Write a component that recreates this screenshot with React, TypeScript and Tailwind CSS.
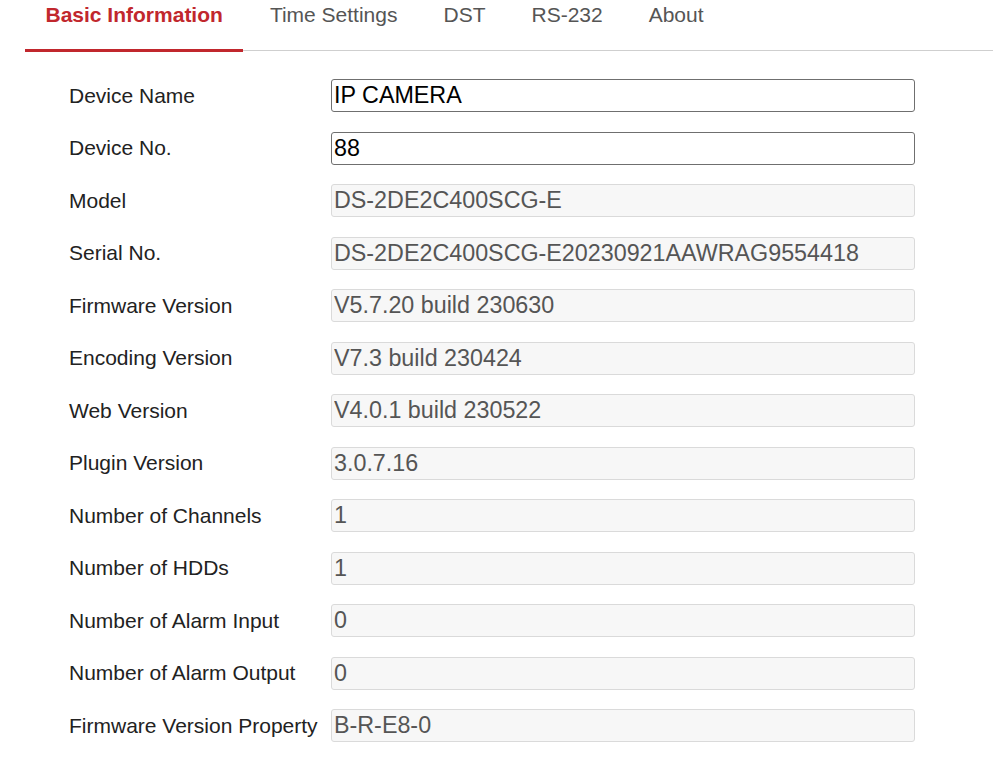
import { useState } from 'react';

type Field = { label: string; value: string; editable?: boolean };

const FIELDS: Field[] = [
  { label: 'Device Name', value: 'IP CAMERA', editable: true },
  { label: 'Device No.', value: '88', editable: true },
  { label: 'Model', value: 'DS-2DE2C400SCG-E' },
  { label: 'Serial No.', value: 'DS-2DE2C400SCG-E20230921AAWRAG9554418' },
  { label: 'Firmware Version', value: 'V5.7.20 build 230630' },
  { label: 'Encoding Version', value: 'V7.3 build 230424' },
  { label: 'Web Version', value: 'V4.0.1 build 230522' },
  { label: 'Plugin Version', value: '3.0.7.16' },
  { label: 'Number of Channels', value: '1' },
  { label: 'Number of HDDs', value: '1' },
  { label: 'Number of Alarm Input', value: '0' },
  { label: 'Number of Alarm Output', value: '0' },
  { label: 'Firmware Version Property', value: 'B-R-E8-0' },
];

const TABS = ['Basic Information', 'Time Settings', 'DST', 'RS-232', 'About'];

export default function App() {
  const [active, setActive] = useState(0);
  const [values, setValues] = useState(FIELDS.map((f) => f.value));

  return (
    <div className="min-h-[776px] w-[993px] bg-white font-['Liberation_Sans',Arial,sans-serif] text-[#222]">
      {/* Tabs */}
      <div className="ml-[25px] flex h-[51px] border-b border-[#cfcfcf]">
        {TABS.map((tab, i) => (
          <button
            key={tab}
            onClick={() => setActive(i)}
            className={
              i === active
                ? '-mb-px mr-[3.5px] h-[52px] border-b-[3px] border-[#c1272d] px-[20.5px] pb-[23px] pt-[3px] text-[21px] leading-[22px] font-bold text-[#c1272d]'
                : 'h-[51px] px-[23px] pb-[24px] pt-[2px] text-[21px] leading-[22px] text-[#555]'
            }
          >
            {tab}
          </button>
        ))}
      </div>

      {/* Form */}
      <div className="mt-[28px] flex flex-col gap-[19.5px] pl-[69px]">
        {FIELDS.map((f, i) => (
          <div key={f.label} className="flex h-[33px] items-center">
            <label className="w-[262px] text-[21px] leading-[24px] text-[#222]">{f.label}</label>
            <input
              value={values[i]}
              readOnly={!f.editable}
              onChange={(e) => {
                const next = [...values];
                next[i] = e.target.value;
                setValues(next);
              }}
              className={
                f.editable
                  ? 'h-[33px] w-[584px] rounded-[3px] border border-[#6f6f6f] bg-white px-[2px] text-[23.3px] text-black outline-none'
                  : 'h-[33px] w-[584px] rounded-[3px] border border-[#dadada] bg-[#f7f7f7] px-[2px] text-[23.3px] text-[#555] outline-none'
              }
            />
          </div>
        ))}
      </div>
    </div>
  );
}
